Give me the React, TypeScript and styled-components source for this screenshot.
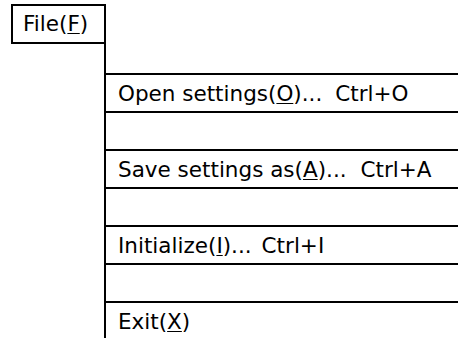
import React from "react";
import styled, { createGlobalStyle } from "styled-components";

const Global = createGlobalStyle`
  html, body {
    margin: 0;
    padding: 0;
    background: #ffffff;
    overflow: hidden;
  }
  body {
    font-family: "DejaVu Sans", "Noto Sans CJK JP", sans-serif;
    color: #000;
  }
`;

const Page = styled.div`
  width: 458px;
  height: 338px;
  overflow: hidden;
  display: flex;
  flex-direction: column;
  padding: 4px 0 0 11px;
  box-sizing: border-box;
`;

const MenuTitle = styled.div`
  width: 95px;
  height: 40px;
  box-sizing: border-box;
  border: 2px solid #000;
  display: flex;
  align-items: center;
  padding: 0 0 2px 10px;
  font-size: 21.5px;
  flex-shrink: 0;
`;

const Dropdown = styled.div`
  margin-left: 93px;
  border-left: 2px solid #000;
  padding-top: 29px;
  flex: 1;
  display: flex;
  flex-direction: column;
  margin-right: -20px;
`;

const Row = styled.div`
  height: 38px;
  box-sizing: border-box;
  border-top: 2px solid #000;
  display: flex;
  align-items: center;
  padding-left: 12px;
  font-size: 21.5px;
  white-space: pre;
  flex-shrink: 0;
`;

const Key = styled.span`
  text-decoration: underline;
  text-underline-offset: 2px;
  text-decoration-thickness: 1px;
`;

const Shortcut = styled.span<{ $gap: number }>`
  margin-left: ${(p) => p.$gap}px;
`;

type Item = { pre: string; key: string; post: string; shortcut?: string; gap?: number } | null;

const items: Item[] = [
  { pre: "Open settings(", key: "O", post: ")...", shortcut: "Ctrl+O", gap: 13 },
  null,
  { pre: "Save settings as(", key: "A", post: ")...", shortcut: "Ctrl+A", gap: 14 },
  null,
  { pre: "Initialize(", key: "I", post: ")...", shortcut: "Ctrl+I", gap: 10 },
  null,
  { pre: "Exit(", key: "X", post: ")" },
];

export default function App() {
  return (
    <>
      <Global />
      <Page>
        <MenuTitle>
          File(<Key>F</Key>)
        </MenuTitle>
        <Dropdown>
          {items.map((it, i) => (
            <Row key={i}>
              {it && (
                <>
                  {it.pre}
                  <Key>{it.key}</Key>
                  {it.post}
                  {it.shortcut && <Shortcut $gap={it.gap ?? 12}>{it.shortcut}</Shortcut>}
                </>
              )}
            </Row>
          ))}
        </Dropdown>
      </Page>
    </>
  );
}
